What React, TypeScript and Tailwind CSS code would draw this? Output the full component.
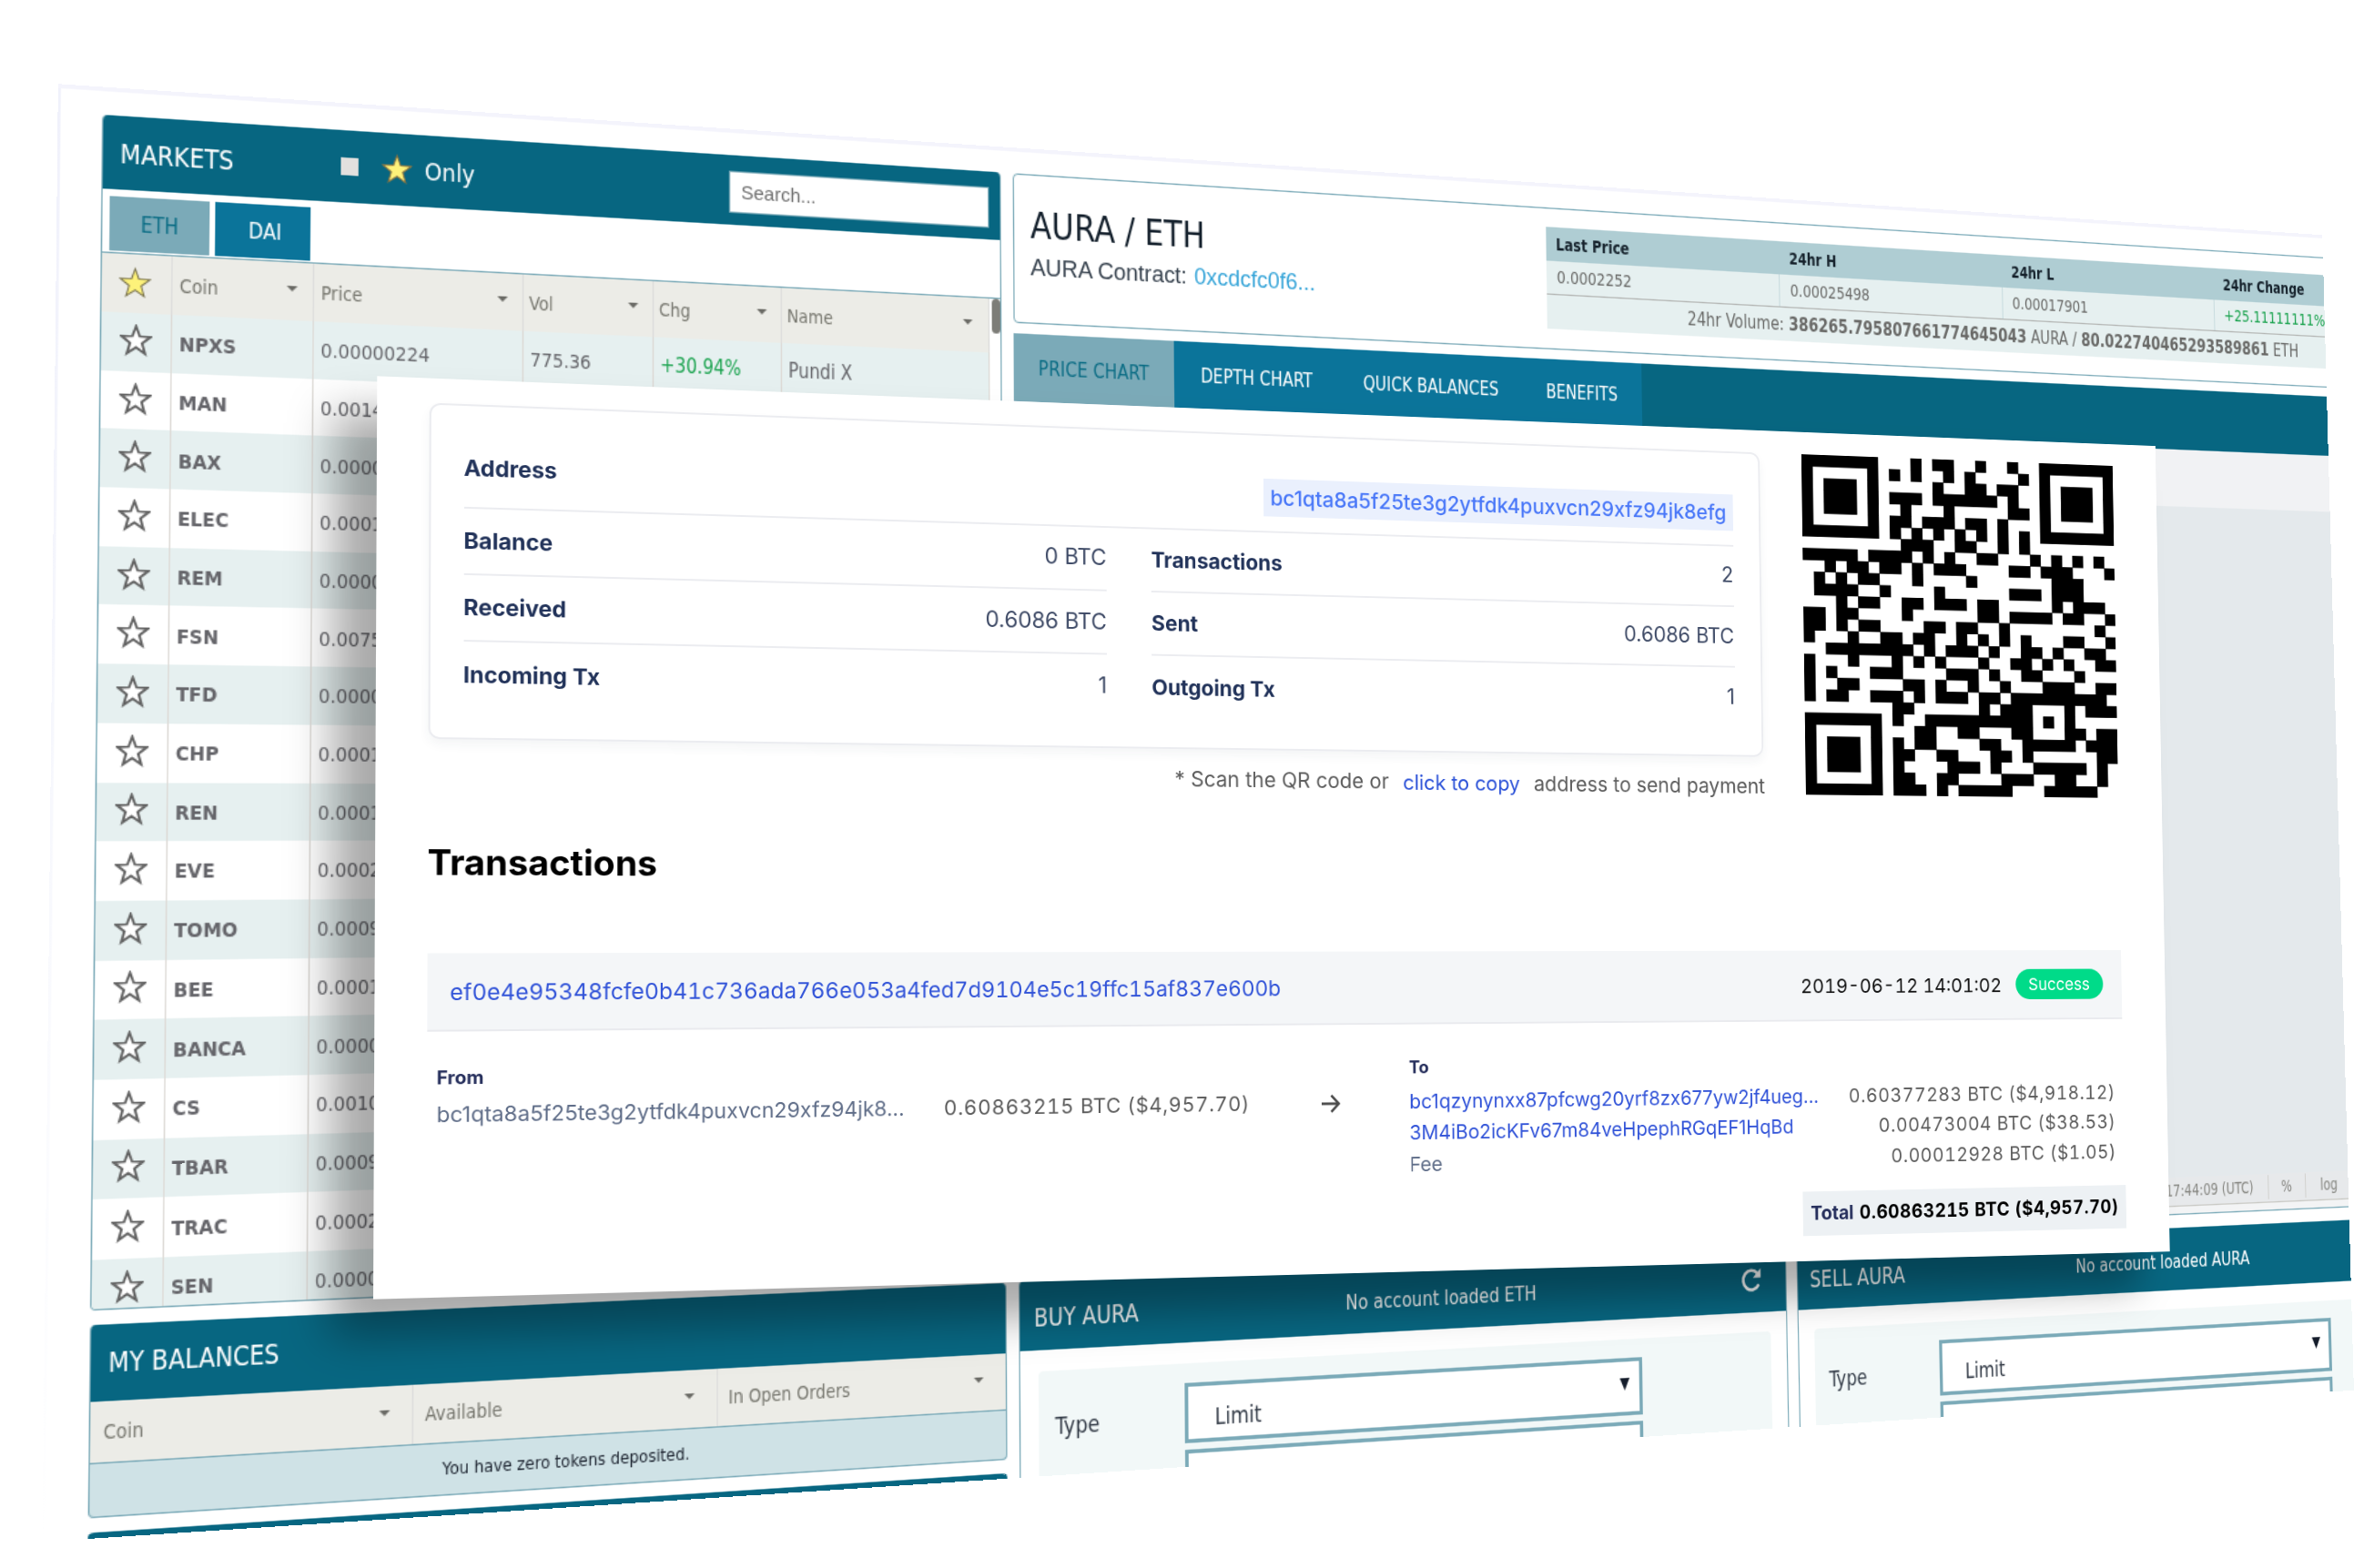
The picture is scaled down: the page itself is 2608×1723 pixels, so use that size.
import React from "react";
import { clsx } from "clsx";

type Point = [number, number];

/** CSS matrix3d that maps the rectangle (x, y, w, h) onto four corners: TL, TR, BR, BL. */
function project([x, y, w, h]: [number, number, number, number], corners: Point[]): string {
  const src: Point[] = [
    [x, y],
    [x + w, y],
    [x + w, y + h],
    [x, y + h],
  ];
  const m: number[][] = [];
  src.forEach(([u, v], i) => {
    const [X, Y] = corners[i];
    m.push([u, v, 1, 0, 0, 0, -X * u, -X * v, X]);
    m.push([0, 0, 0, u, v, 1, -Y * u, -Y * v, Y]);
  });
  for (let c = 0; c < 8; c++) {
    let p = c;
    for (let r = c; r < 8; r++) if (Math.abs(m[r][c]) > Math.abs(m[p][c])) p = r;
    [m[c], m[p]] = [m[p], m[c]];
    for (let r = 0; r < 8; r++) {
      if (r === c) continue;
      const f = m[r][c] / m[c][c];
      for (let k = c; k < 9; k++) m[r][k] -= f * m[c][k];
    }
  }
  const [a, b, c, d, e, f, g, i] = m.map((row, n) => row[8] / row[n]);
  return `matrix3d(${[a, d, 0, g, b, e, 0, i, 0, 0, 1, 0, c, f, 0, 1].map((n) => n.toFixed(12)).join(",")})`;
}

const exchangePlane = project([31, 20, 1960, 1000], [
  [112.1, 126],
  [2551.8, 282.7],
  [2585.8, 1527.7],
  [96.4, 1691],
]);

const cardPlane = project([0, 0, 2128, 1000], [
  [414.3, 413.3],
  [2367.4, 490],
  [2383.3, 1375],
  [410, 1427.7],
]);

const STAR = "M12 1.5l2.7 7.400 8.100.250-6.350 4.950 2.250 7.750L12 17.300l-6.700 4.550 2.250-7.750L1.200 9.150l8.100-.250z";

function Star({ filled = false, edge = "#606060", className = "" }: { filled?: boolean; edge?: string; className?: string }) {
  return (
    <svg viewBox="0 0 24 24" className={clsx("size-[23px] shrink-0", className)}>
      <path d={STAR} fill={filled ? "#fdf27a" : "#ffffff"} stroke={edge} strokeWidth={filled ? 1 : 1.8} />
    </svg>
  );
}

function SortArrow() {
  return (
    <svg viewBox="0 0 8 4" className="mb-1 h-1 w-2 shrink-0">
      <path d="M0 0h8L4 4z" fill="#6b6b66" />
    </svg>
  );
}

function HeadCell({ label, className }: { label: string; className: string }) {
  return (
    <div className={clsx("flex items-center justify-between border-r border-[#dddddc]", className)}>
      <span>{label}</span>
      <SortArrow />
    </div>
  );
}

const coins: [string, string, string?, string?, string?][] = [
  ["NPXS", "0.00000224", "775.36", "+30.94%", "Pundi X"],
  ["MAN", "0.0014"],
  ["BAX", "0.0000"],
  ["ELEC", "0.0001"],
  ["REM", "0.0000"],
  ["FSN", "0.0075"],
  ["TFD", "0.0000"],
  ["CHP", "0.0001"],
  ["REN", "0.0001"],
  ["EVE", "0.0002"],
  ["TOMO", "0.0009"],
  ["BEE", "0.0001"],
  ["BANCA", "0.0000"],
  ["CS", "0.0010"],
  ["TBAR", "0.0009"],
  ["TRAC", "0.0002"],
  ["SEN", "0.0000"],
];

const cell = "flex items-center border-r border-[#dddad6] pl-[5px] pt-px";

function Markets() {
  return (
    <section className="flex h-[843px] flex-col overflow-hidden rounded border border-t-0 border-[#7baab8] bg-white">
      <header className="flex h-[53px] shrink-0 items-center bg-[#076681] pl-[12px] text-[18.900px] text-white">
        <h2 className="w-[159px] pt-0.5">MARKETS</h2>
        <span className="size-[13px] bg-[#e2e0de]" />
        <Star filled edge="#8d7440" className="ml-[17px]" />
        <span className="ml-[9px] text-[18.400px]">Only</span>
        <div className="ml-auto mr-[9px] mt-0.5 flex h-8 w-[211px] items-center border border-[#7baab8] bg-white pt-0.5 pl-[9px] font-['Liberation_Sans',sans-serif] text-[15px] text-[#6f6f6f]">
          Search...
        </div>
      </header>
      <nav className="flex h-[45px] shrink-0 gap-1 pl-[5px] pt-[5px]">
        <span className="flex h-[39px] w-[71px] items-center justify-center bg-[#7baab8] pt-0.5 text-[15px] text-[#0a6c84]">ETH</span>
        <span className="flex h-[39px] w-[69px] items-center justify-center bg-[#0b749a] pt-0.5 pl-[3px] text-[15.500px] text-white">DAI</span>
      </nav>
      <div className="flex min-h-0 grow border-t-[1.500px] border-[#7baab8]">
        <div className="flex w-[678px] shrink-0 flex-col overflow-hidden text-[14.800px] text-[#65656a]">
          <div className="flex h-[42px] shrink-0 bg-[#ecece7] text-[13.900px] text-[#77776f]">
            <div className="flex w-[50px] items-center border-r border-[#dddddc] pl-3 pb-0.5">
              <Star filled edge="#77704a" />
            </div>
            <HeadCell label="Coin" className="w-[102px] pl-[5px] pr-[11px]" />
            <HeadCell label="Price" className="w-[156px] pl-[5px] pr-[11px]" />
            <HeadCell label="Vol" className="w-[100px] pl-[4px] pr-[11px]" />
            <HeadCell label="Chg" className="w-[101px] pl-[4px] pr-[11px]" />
            <HeadCell label="Name" className="w-[169px] pl-[4px] pr-[13px]" />
          </div>
          {coins.map(([coin, price, vol, chg, name], i) => (
            <div key={coin} className={clsx("flex h-[41.700px] shrink-0", i % 2 === 0 ? "bg-[#e6f0f0]" : "bg-white")}>
              <div className="flex w-[50px] items-center border-r border-[#dddad6] pl-[12.500px] pb-[3px]">
                <Star />
              </div>
              <div className={clsx(cell, "w-[102px] text-[14.800px] font-bold")}>{coin}</div>
              <div className={clsx(cell, "w-[156px]")}>{price}</div>
              <div className={clsx(cell, "w-[100px]")}>{vol}</div>
              <div className={clsx(cell, "w-[101px] text-[15.200px] text-[#1ba34f]")}>{chg}</div>
              <div className={clsx(cell, "w-[169px] text-[15.200px]")}>{name}</div>
            </div>
          ))}
        </div>
        <span className="ml-[1.500px] h-[27px] w-2 rounded-full bg-[#7d7d78]" />
      </div>
    </section>
  );
}

function Balances() {
  return (
    <section className="mt-2.5 h-[133px] overflow-hidden rounded border border-t-0 border-[#7baab8] bg-[#cfe2e6]">
      <h2 className="flex h-[53px] items-center bg-[#076681] pt-px pl-[12px] text-[18.700px] text-white">MY BALANCES</h2>
      <div className="flex h-[43px] border-b border-[#7baab8] bg-[#ecece7] text-[14px] text-[#77776f]">
        <HeadCell label="Coin" className="w-[229px] pl-[9px] pr-[16px]" />
        <HeadCell label="Available" className="w-[230px] pl-[9px] pr-[17px]" />
        <HeadCell label="In Open Orders" className="w-[229px] border-r-0 pl-[8px] pr-[18px]" />
      </div>
      <p className="flex h-9 items-center justify-center text-[12.800px] text-[#1d2430]">You have zero tokens deposited.</p>
    </section>
  );
}

const stats = [
  ["Last Price", "0.0002252"],
  ["24hr H", "0.00025498"],
  ["24hr L", "0.00017901"],
  ["24hr Change", "+25.11111111%"],
];

function PairSummary() {
  return (
    <section className="flex h-[117px] rounded border border-[#7baab8] bg-white">
      <div className="w-[470px] pl-3.5 pt-[21px]">
        <h1 className="text-[29px] leading-9 text-[#14202c]">AURA / ETH</h1>
        <p className="mt-px font-['Liberation_Sans',sans-serif] text-[18.900px] leading-7 text-[#37424e]">
          AURA Contract: <span className="ml-px text-[#35a4d8]">0xcdcfc0f6...</span>
        </p>
      </div>
      <div className="mt-[15px] w-[894px] text-[14.500px] text-[#6a6a68]">
        <div className="flex h-7 bg-[#afcdd3] text-[13.800px] font-bold text-[#16222c]">
          {stats.map(([label]) => (
            <div key={label} className="flex w-[223.500px] items-center pl-[9.500px]">{label}</div>
          ))}
        </div>
        <div className="flex h-7 border-b border-[#b4b6b4] bg-[#e6f0f0]">
          {stats.map(([label, value], i) => (
            <div
              key={label}
              className={clsx("flex w-[223.500px] items-center pl-2.5", i < 3 ? "border-r border-[#c9dcdf]" : "text-[#1ba34f]")}
            >
              {value}
            </div>
          ))}
        </div>
        <p className="h-7 bg-[#e6f0f0] text-center text-[15.600px] leading-7">
          24hr Volume: <b>386265.795807661774645043</b> AURA / <b>80.022740465293589861</b> ETH
        </p>
      </div>
    </section>
  );
}

function Chart() {
  return (
    <section className="mt-2 h-[716px] overflow-hidden border-b border-[#7baab8] bg-white">
      <nav className="flex h-[52.500px] bg-[#076681] text-[15.500px] text-white">
        <span className="flex w-[136px] items-center justify-center bg-[#7baab8] pt-px text-[15.800px] text-[#0a6c84]">PRICE CHART</span>
        <span className="flex w-[144px] items-center justify-center bg-[#0b749a] pt-0.5 pl-px">DEPTH CHART</span>
        <span className="flex w-[167px] items-center justify-center bg-[#0b749a] pt-0.5 pl-px">QUICK BALANCES</span>
        <span className="flex w-[112px] items-center justify-center bg-[#0b749a] pt-[3px]">BENEFITS</span>
      </nav>
      <div className="h-[50px] bg-[#f1f2f4]" />
      <div className="h-[581px] bg-[#e4e9ec]" />
      <div className="flex h-[25px] items-center border-b border-[#c9c9c4] bg-[#e7e9eb] pl-[1066px] text-[13.700px] text-[#868681]">
        <span className="w-[109px] border-r border-[#d2d2cf]">17:44:09 (UTC)</span>
        <span className="w-10 border-r border-[#d2d2cf] text-center">%</span>
        <span className="pl-4">log</span>
      </div>
      <div className="h-[7px] bg-[#f3f4f5]" />
    </section>
  );
}

function SelectBox({ value }: { value?: string }) {
  return (
    <div className="flex h-[53px] w-[407px] items-center justify-between border-[3px] border-[#7baab8] bg-white pl-[23px] pr-[9px]">
      {value && (
        <>
          <span className="pt-[7px]">{value}</span>
          <svg viewBox="0 0 9 10" className="mb-1 h-2.5 w-[9px]">
            <path d="M0 0h9L4.500 10z" fill="#141c2b" />
          </svg>
        </>
      )}
    </div>
  );
}

function OrderForm({ title, status, refresh = false }: { title: string; status: string; refresh?: boolean }) {
  return (
    <section className="h-40 w-[683px] overflow-hidden rounded-t border border-t-0 border-[#7baab8] bg-white">
      <header className="flex h-[53px] items-center bg-[#076681] pl-[12px] text-white">
        <h2 className="w-[265px] pt-[3px] text-[19px]">{title}</h2>
        <span className="pt-[6px] text-[16.300px]">{status}</span>
        {refresh && (
          <svg viewBox="0 0 24 24" className="ml-auto mr-[22px] size-[21px]" fill="none" stroke="#ffffff" strokeWidth="3">
            <path d="M19.800 16.500A9 9 0 1 1 18.500 6" />
            <path d="M22 1.500V10h-8.500z" fill="#ffffff" stroke="none" />
          </svg>
        )}
      </header>
      <div className="mx-[15px] mt-4 flex h-28 rounded bg-[#f2f8f8] pl-[14px] pt-[15px] text-[18px] text-[#333b47]">
        <span className="flex h-[53px] w-[108px] items-center">Type</span>
        <div className="flex flex-col gap-[5px]">
          <SelectBox value="Limit" />
          <SelectBox />
        </div>
      </div>
    </section>
  );
}

function Exchange() {
  return (
    <div
      className="absolute left-0 top-0 h-[1020px] w-[1991px] origin-top-left overflow-hidden bg-white font-['DejaVu_Sans_Condensed','DejaVu_Sans',sans-serif] font-stretch-condensed"
      style={{ transform: exchangePlane }}
    >
      <div className="flex h-full w-[2110px] border-t-[3px] border-[#f4f4fc]">
        <div className="w-[2px] bg-linear-to-b from-[#f0f1fb] via-[#f7f8fd] to-white" />
        <div className="ml-[29px] mt-[17px] w-[688.500px] shrink-0">
          <Markets />
          <Balances />
          <div className="mt-2.5 h-10 rounded-t bg-[#076681]" />
        </div>
        <div className="ml-2.5 mt-[17px] w-[1376px] shrink-0">
          <PairSummary />
          <Chart />
          <div className="mt-[11px] flex gap-[10px]">
            <OrderForm title="BUY AURA" status="No account loaded ETH" refresh />
            <OrderForm title="SELL AURA" status="No account loaded AURA" />
          </div>
        </div>
      </div>
    </div>
  );
}

/** Dark runs of each QR row, as [first column, last column]. */
const qrRows: number[][][] = [
  [[0, 6], [10, 10], [12, 13], [16, 16], [19, 19], [22, 28]],
  [[0, 0], [6, 6], [8, 8], [10, 10], [13, 13], [15, 15], [20, 20], [22, 22], [28, 28]],
  [[0, 0], [2, 4], [6, 6], [12, 12], [15, 16], [18, 19], [22, 22], [24, 26], [28, 28]],
  [[0, 0], [2, 4], [6, 6], [8, 10], [12, 17], [19, 19], [22, 22], [24, 26], [28, 28]],
  [[0, 0], [2, 4], [6, 6], [9, 9], [13, 13], [19, 20], [22, 22], [24, 26], [28, 28]],
  [[0, 0], [6, 6], [8, 9], [11, 13], [15, 16], [18, 18], [22, 22], [28, 28]],
  [[0, 6], [8, 8], [10, 10], [12, 12], [14, 14], [16, 16], [18, 18], [20, 20], [22, 28]],
  [[9, 11], [14, 15], [18, 18], [20, 20]],
  [[0, 4], [6, 9], [11, 11], [13, 13], [16, 17], [21, 21], [23, 23], [25, 25], [27, 27]],
  [[2, 2], [4, 5], [7, 8], [10, 10], [12, 14], [19, 20], [22, 24], [28, 28]],
  [[1, 1], [3, 3], [5, 6], [10, 10], [15, 15], [23, 25]],
  [[1, 4], [7, 7], [12, 12], [19, 21], [23, 25]],
  [[3, 3], [5, 6], [9, 10], [12, 14], [16, 17], [23, 23], [25, 27]],
  [[0, 1], [3, 4], [9, 9], [16, 17], [19, 22], [24, 25], [28, 28]],
  [[0, 1], [3, 3], [5, 6], [11, 12], [14, 15], [18, 18], [27, 27]],
  [[0, 0], [4, 4], [7, 8], [10, 11], [14, 14], [16, 16], [18, 18], [20, 20], [24, 25], [28, 28]],
  [[2, 9], [11, 11], [13, 15], [17, 17], [20, 21], [23, 23], [26, 27]],
  [[0, 0], [4, 4], [8, 8], [10, 10], [12, 12], [16, 16], [19, 20], [22, 22], [24, 24], [27, 28]],
  [[0, 0], [2, 2], [6, 8], [13, 15], [17, 17], [20, 21], [25, 25]],
  [[0, 0], [3, 4], [9, 10], [12, 12], [15, 15], [18, 18], [22, 24], [27, 28]],
  [[0, 0], [2, 3], [6, 8], [10, 10], [12, 14], [16, 17], [19, 27]],
  [[8, 9], [16, 16], [18, 20], [24, 24], [26, 28]],
  [[0, 6], [8, 8], [11, 20], [22, 22], [24, 24]],
  [[0, 0], [6, 6], [10, 11], [14, 15], [19, 20], [24, 25], [27, 28]],
  [[0, 0], [2, 4], [6, 6], [8, 8], [10, 11], [16, 17], [20, 24], [26, 28]],
  [[0, 0], [2, 4], [6, 6], [8, 9], [12, 13], [17, 18], [20, 20], [27, 28]],
  [[0, 0], [2, 4], [6, 6], [8, 8], [13, 15], [17, 17], [21, 25], [27, 27]],
  [[0, 0], [6, 6], [8, 9], [12, 13], [18, 20], [23, 24], [27, 27]],
  [[0, 6], [8, 10], [12, 12], [14, 18], [22, 26]],
];

function QrCode() {
  const d = qrRows
    .flatMap((runs, y) => runs.map(([from, to]) => `M${from} ${y}h${to - from + 1}v1h${from - to - 1}z`))
    .join("");
  return (
    <svg viewBox="0 0 29 29" className="size-[413.500px] shrink-0">
      <path d={d} fill="#000000" stroke="#000000" strokeWidth="0.03" />
    </svg>
  );
}

function Fact({ label, value, last = false }: { label: string; value: string; last?: boolean }) {
  return (
    <div className={clsx("flex h-[73.300px] items-center justify-between", last ? "pb-0.5" : "border-b-2 border-[#ebecf0]")}>
      <span className="text-[24.300px] font-bold text-[#22335a]">{label}</span>
      <span className="text-[25px] text-[#3e4a66]">{value}</span>
    </div>
  );
}

function AddressCard() {
  return (
    <div
      className="absolute left-0 top-0 h-[1000px] w-[2128px] origin-top-left bg-white pl-[54.500px] pt-[26.500px] font-['Inter',sans-serif] shadow-[-44px_40px_44px_0_rgba(0,0,0,0.34)]"
      style={{ transform: cardPlane }}
    >
      <div className="flex h-[422px] gap-[54px]">
        <div>
          <div className="h-[368px] w-[1547px] rounded-xl border-2 border-[#ebecf0] pl-[35px] pr-[33px] shadow-[0_6px_12px_rgba(40,50,80,0.05)]">
            <div className="flex h-[113px] justify-between border-b-2 border-[#ebecf0]">
              <span className="mt-[46px] h-11 text-[24.300px] leading-[44px] font-bold text-[#22335a]">Address</span>
              <span className="mt-[50.500px] h-11 bg-[#eaf0fd] px-[8px] text-[24.550px] leading-[44px] font-medium text-[#4a78f8]">
                bc1qta8a5f25te3g2ytfdk4puxvcn29xfz94jk8efg
              </span>
            </div>
            <div className="grid grid-cols-2 gap-x-[52px]">
              <Fact label="Balance" value="0 BTC" />
              <Fact label="Transactions" value="2" />
              <Fact label="Received" value="0.6086 BTC" />
              <Fact label="Sent" value="0.6086 BTC" />
              <Fact label="Incoming Tx" value="1" last />
              <Fact label="Outgoing Tx" value="1" last />
            </div>
          </div>
          <p className="-mr-0.5 mt-[18px] flex h-9 items-center justify-end gap-[17px] text-[24.200px] text-[#5c5c5c]">
            <span>* Scan the QR code or</span>
            <span className="text-[23.900px] text-[#2c52d8]">click to copy</span>
            <span className="text-[24.300px]">address to send payment</span>
          </p>
        </div>
        <QrCode />
      </div>
      <h2 className="mt-[56.500px] text-[38.400px] leading-[48px] font-bold text-black">Transactions</h2>
      <div className="mt-[75px] flex h-[85px] w-[2014px] items-center border-b-2 border-[#e9eaee] bg-[#f4f6f8] pl-[24px] pr-[25px] tabular-nums">
        <span className="pt-0.5 text-[24.350px] text-[#3153d8]">ef0e4e95348fcfe0b41c736ada766e053a4fed7d9104e5c19ffc15af837e600b</span>
        <span className="ml-auto pt-0.5 text-[23.500px] text-[#111111]">2019-06-12 14:01:02</span>
        <span className="ml-[18px] flex h-[37px] w-[117px] items-center justify-center rounded-full bg-[#00db89] pt-0.5 text-[20.500px] text-white">
          Success
        </span>
      </div>
      <div className="flex pl-[10.500px] pt-[35.500px] text-[23.150px] leading-[36.500px] text-[#5c5c5c]">
        <div className="w-[902px]">
          <h3 className="mb-[8px] text-[20px] leading-7 font-bold text-[#262f5c]">From</h3>
          <div className="flex justify-between">
            <span className="text-[#5f6d88]">bc1qta8a5f25te3g2ytfdk4puxvcn29xfz94jk8...</span>
            <span className="tracking-[0.700px] tabular-nums">0.60863215 BTC ($4,957.70)</span>
          </div>
        </div>
        <svg viewBox="0 0 24 24" className="ml-[84px] mr-[82px] mt-[43px] size-6" fill="none" stroke="#4b4b4b" strokeWidth="2.800">
          <path d="M1 12h20M12.500 2.500L21.500 12l-9 9.500" />
        </svg>
        <div className="w-[901px]">
          <h3 className="mb-[8px] text-[20px] leading-7 font-bold text-[#262f5c]">To</h3>
          <div className="flex justify-between">
            <span className="text-[#3153d8]">bc1qzynynxx87pfcwg20yrf8zx677yw2jf4ueg...</span>
            <span className="tracking-[0.700px] tabular-nums">0.60377283 BTC ($4,918.12)</span>
          </div>
          <div className="flex justify-between">
            <span className="text-[#3153d8]">3M4iBo2icKFv67m84veHpephRGqEF1HqBd</span>
            <span className="tracking-[0.700px] tabular-nums">0.00473004 BTC ($38.53)</span>
          </div>
          <div className="flex justify-between">
            <span className="text-[#5f6d88]">Fee</span>
            <span className="tracking-[0.700px] tabular-nums">0.00012928 BTC ($1.05)</span>
          </div>
          <div className="-mr-3 ml-auto mt-[22.500px] flex h-[53.500px] w-[425px] items-center justify-between bg-[#edf1f4] px-[10px] font-bold text-black">
            <span className="text-[22.800px] text-[#262f5c]">Total</span>
            <span className="text-[22.600px] tracking-[0.600px] tabular-nums">0.60863215 BTC ($4,957.70)</span>
          </div>
        </div>
      </div>
    </div>
  );
}

export default function App() {
  return (
    <main className="relative h-[1723px] w-[2608px] overflow-hidden bg-white">
      <Exchange />
      <AddressCard />
    </main>
  );
}
